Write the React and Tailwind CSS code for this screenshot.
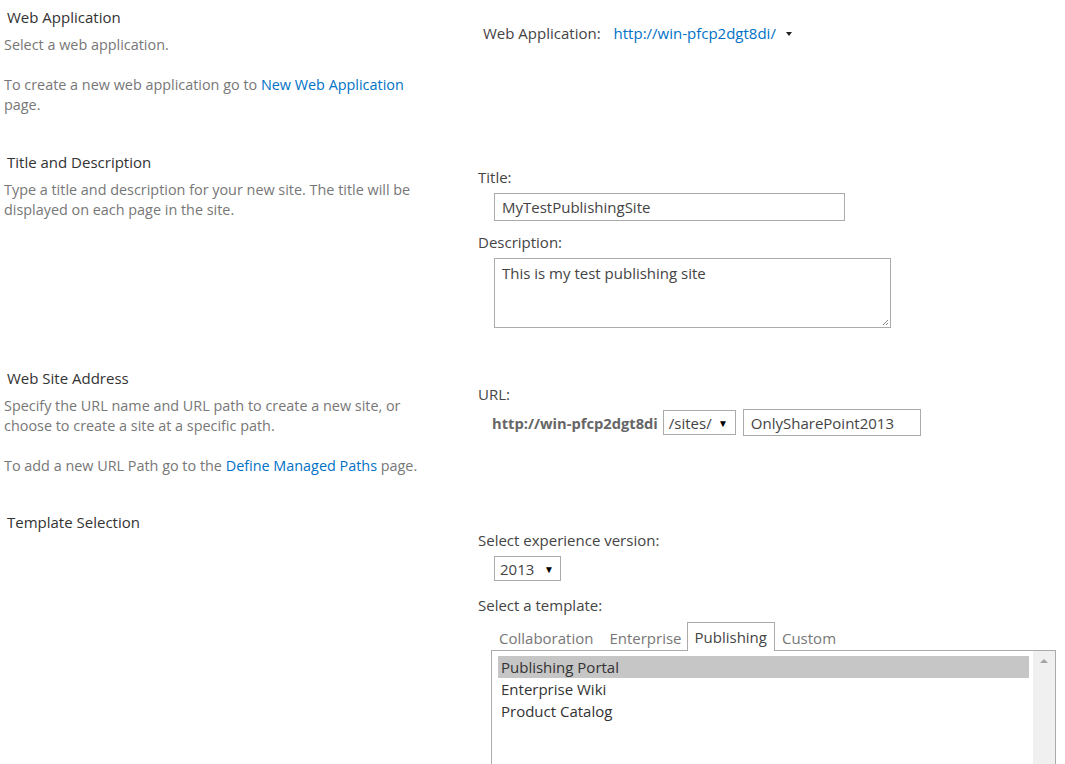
import React from "react";

const font = { fontFamily: '"Open Sans", "Noto Sans", sans-serif' };

function Section({ title, left, right, className = "" }) {
  return (
    <div className={`flex ${className}`}>
      <div className="w-[478px] shrink-0 pl-[4px]">
        <div className="pl-[3px] text-[15px] leading-5 text-[#333]">{title}</div>
        <div className="mt-2 w-[430px] text-[14.4px] leading-5 text-[#777]">{left}</div>
      </div>
      <div className="flex-1">{right}</div>
    </div>
  );
}

function Caret() {
  return <span className="text-[10px] text-black">▼</span>;
}

export default function App() {
  return (
    <div className="h-[764px] w-[1065px] overflow-hidden bg-white pt-[7px] text-[#444]" style={font}>
      {/* Web application */}
      <Section
        title="Web Application"
        left={
          <>
            <p>Select a web application.</p>
            <p className="mt-5">
              To create a new web application go to{" "}
              <a className="text-[#0072c6]">New Web Application</a> page.
            </p>
          </>
        }
        right={
          <div className="mt-4 flex items-center pl-[5px] text-[15px] leading-5">
            <span className="text-[#444]">Web Application:</span>
            <span className="ml-[13px] text-[#0072c6]">http://win-pfcp2dgt8di/</span>
            <span className="ml-[10px] mt-[2px] h-0 w-0 border-x-[3.5px] border-t-[4px] border-x-transparent border-t-[#222]" />
          </div>
        }
      />

      {/* Title and description */}
      <Section
        className="mt-[37px]"
        title="Title and Description"
        left={
          <p>
            Type a title and description for your new site. The title will be
            displayed on each page in the site.
          </p>
        }
        right={
          <div className="mt-[15px] text-[15px] leading-5">
            <div>Title:</div>
            <div className="ml-4 mt-[6px] flex h-[28px] w-[351px] items-center border border-[#ababab] px-[7px]">
              MyTestPublishingSite
            </div>
            <div className="mt-[11px]">Description:</div>
            <div className="relative ml-4 mt-[6px] h-[70px] w-[397px] border border-[#ababab] px-[7px] pt-[4px]">
              This is my test publishing site
              <svg className="absolute bottom-[1px] right-[1px]" width="8" height="8" viewBox="0 0 8 8">
                <path d="M7 2 L2 7 M7 5 L5 7" stroke="#888" strokeWidth="1" />
              </svg>
            </div>
          </div>
        }
      />

      {/* Web site address */}
      <Section
        className="mt-[40px]"
        title="Web Site Address"
        left={
          <>
            <p>
              Specify the URL name and URL path to create a new site, or
              <br />
              choose to create a site at a specific path.
            </p>
            <p className="mt-5">
              To add a new URL Path go to the{" "}
              <a className="text-[#0072c6]">Define Managed Paths</a> page.
            </p>
          </>
        }
        right={
          <div className="mt-4 text-[15px] leading-5">
            <div>URL:</div>
            <div className="mt-[5px] flex items-center">
              <span className="ml-[14px] text-[14.7px] font-bold text-[#666]">http://win-pfcp2dgt8di</span>
              <div className="ml-[5px] flex h-[25px] w-[73px] items-center justify-between border border-[#ababab] pl-[5px] pr-[7px]">
                <span>/sites/</span>
                <Caret />
              </div>
              <div className="ml-[7px] flex h-[27px] w-[178px] items-center border border-[#ababab] px-[7px]">
                OnlySharePoint2013
              </div>
            </div>
          </div>
        }
      />

      {/* Template selection */}
      <Section
        className="mt-[36px]"
        title="Template Selection"
        left={null}
        right={
          <div className="mt-[18px] text-[15px] leading-5">
            <div>Select experience version:</div>
            <div className="ml-4 mt-[6px] flex h-[25px] w-[67px] items-center justify-between border border-[#ababab] pl-[5px] pr-[6px]">
              <span>2013</span>
              <Caret />
            </div>
            <div className="mt-[14px]">Select a template:</div>
            <div className="ml-[13px] mt-[7px] w-[565px]">
              <div className="flex h-[28px] items-end text-[#777]">
                <span className="mb-[2px] pl-[8px] pr-[8px]">Collaboration</span>
                <span className="mb-[2px] pl-[8px] pr-[5px]">Enterprise</span>
                <span className="relative -mb-px flex h-[29px] items-center border border-b-0 border-[#ababab] bg-white px-[7px] text-[#444]">
                  Publishing
                </span>
                <span className="mb-[2px] px-[7px]">Custom</span>
              </div>
              <div className="flex h-[150px] border border-[#ababab] text-[#333]">
                <div className="flex-1 pl-[6px] pr-[4px] pt-[5px]">
                  <div className="h-[22px] bg-[#c6c6c6] pl-[3px] leading-[22px]">Publishing Portal</div>
                  <div className="pl-[3px] leading-[22px]">Enterprise Wiki</div>
                  <div className="pl-[3px] leading-[22px]">Product Catalog</div>
                </div>
                <div className="flex w-[22px] justify-center bg-[#f0f0f0] pt-[8px]">
                  <span className="h-0 w-0 border-x-[4px] border-b-[4px] border-x-transparent border-b-[#a3a3a3]" />
                </div>
              </div>
            </div>
          </div>
        }
      />
    </div>
  );
}
